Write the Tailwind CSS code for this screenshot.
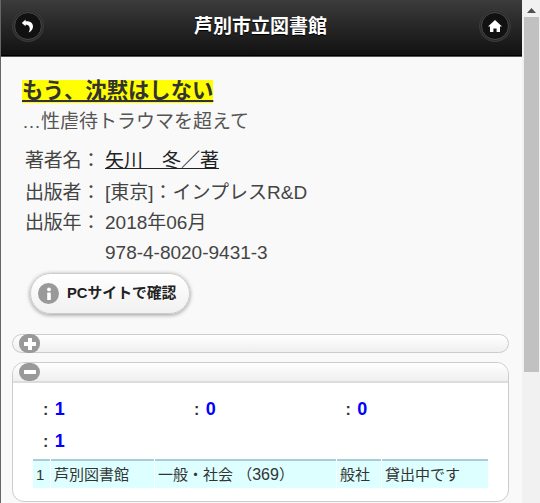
<!DOCTYPE html>
<html lang="ja">
<head>
    <meta charset="UTF-8">
    <meta name="viewport" content="width=device-width, initial-scale=1.0">
    <title>芦別市立図書館</title>
    <script src="https://cdn.jsdelivr.net/npm/@tailwindcss/browser@4"></script>
</head>
<body class="h-[503px] overflow-hidden bg-[#f9f9f9] font-['Liberation_Sans','Noto_Sans_CJK_JP',sans-serif] text-[#333]">
    <div class="flex h-[503px]">
        <main class="w-[522px] shrink-0 border-l border-[#666]">
            <!-- Header -->
            <header class="flex h-[57px] items-center justify-between border-b border-b-[#555] bg-gradient-to-b from-[#3c3c3c] to-[#111] pr-[13px] pb-[4px] pl-[13px] shadow-[inset_0_-1px_0_#000]">
                <button class="flex h-[28px] w-[28px] items-center justify-center rounded-full border border-[#4a4a4a] bg-[#111] shadow-[0_0_0_1px_#2a2a2a,0_0_0_2px_#3a3a3a]" aria-label="戻る">
                    <svg viewBox="0 0 14 14" class="h-[14px] w-[14px]"><path d="M4.6 0.6 L4.6 7.2 L0.8 3.9 Z M4.4 2.4 C8.6 2 12 4 12 7.4 C12 10 10.4 12.2 7.6 13.4 C8.8 11.4 9 10 8.6 8.4 C8.2 6.6 6.6 5.4 4.4 5.4 Z" fill="#fff"/></svg>
                </button>
                <h1 class="-ml-[2px] text-[19px] leading-none font-bold text-white [text-shadow:0_1px_1px_#000]">芦別市立図書館</h1>
                <button class="flex h-[28px] w-[28px] items-center justify-center rounded-full border border-[#4a4a4a] bg-[#111] shadow-[0_0_0_1px_#2a2a2a,0_0_0_2px_#3a3a3a]" aria-label="ホーム">
                    <svg viewBox="0 0 14 14" class="h-[14px] w-[14px]"><path d="M7 1 L14 7.4 L12 7.4 L12 13 L8.6 13 L8.6 9.4 L5.4 9.4 L5.4 13 L2 13 L2 7.4 L0 7.4 Z" fill="#fff"/></svg>
                </button>
            </header>

            <!-- Book detail -->
            <section class="pt-[23px] pl-[21px]">
                <h2 class="w-fit bg-[#ff0] text-[21.33px] leading-[23px] font-bold text-[#333] underline">もう、沈黙はしない</h2>
                <p class="mt-[5px] text-[19px] leading-[28px] text-[#555]">…性虐待トラウマを超えて</p>
                <dl class="mt-[10px] pl-[3px] text-[19px] leading-[30px] text-[#444]">
                    <div class="flex h-[32px]"><dt class="w-[80px] tracking-[-0.2px]">著者名：</dt><dd class="text-[#222] underline">矢川　冬／著</dd></div>
                    <div class="flex h-[30px]"><dt class="w-[80px] tracking-[-0.2px]">出版者：</dt><dd>[東京]：インプレスR&amp;D</dd></div>
                    <div class="flex h-[30px]"><dt class="w-[80px] tracking-[-0.2px]">出版年：</dt><dd>2018年06月</dd></div>
                    <div class="flex h-[30px]"><dt class="w-[80px]"></dt><dd>978-4-8020-9431-3</dd></div>
                </dl>
                <button class="mt-[5px] ml-[8px] flex h-[41px] w-[160px] items-center gap-[8px] rounded-full border border-[#ccc] bg-gradient-to-b from-white to-[#f1f1f1] pl-[7px] text-[14.8px] font-bold text-[#222] shadow-[0_1px_4px_rgba(0,0,0,0.4)]">
                    <span class="flex h-[21px] w-[21px] items-center justify-center rounded-full bg-[#999]">
                        <svg viewBox="0 0 12 14" class="h-[14px] w-[12px]"><circle cx="6" cy="2.4" r="1.9" fill="#fff"/><rect x="4.2" y="5.4" width="3.6" height="7.6" rx="0.6" fill="#fff"/></svg>
                    </span>
                    PCサイトで確認
                </button>
            </section>

            <!-- Collapsibles -->
            <section class="mt-[20px] mr-[13px] ml-[11px] flex h-[19px] rounded-full border border-[#ccc] bg-gradient-to-b from-white to-[#efefef]">
                <span class="-mt-px ml-[6px] flex h-[19px] w-[21px] items-center justify-center rounded-[9px] bg-[#999]">
                    <svg viewBox="0 0 14 14" class="h-[14px] w-[14px]"><path d="M5 1 H9 V5 H13 V9 H9 V13 H5 V9 H1 V5 H5 Z" fill="#fff"/></svg>
                </span>
            </section>
            <section class="mt-[9px] mr-[13px] ml-[11px] h-[140px] rounded-[12px] border border-[#ccc] bg-white">
                <div class="flex h-[20px] rounded-t-[12px] border-b-2 border-b-[#ddd] bg-gradient-to-b from-white to-[#efefef] pl-[6px]">
                    <span class="flex h-[18px] w-[21px] items-center justify-center rounded-[9px] bg-[#999]">
                        <svg viewBox="0 0 14 14" class="h-[14px] w-[14px]"><rect x="1" y="5" width="12" height="4" rx="0.5" fill="#fff"/></svg>
                    </span>
                </div>
                <div class="pt-[10px] pl-[20px]">
                    <div class="grid h-[32px] w-[480px] grid-cols-[151px_151.5px_1fr] items-center text-[16px]">
                        <p class="pl-[10px] font-bold text-[#333]">: <span class="ml-[2px] text-[18px] text-[#00f]">1</span></p>
                        <p class="pl-[10px] font-bold text-[#333]">: <span class="ml-[2px] text-[18px] text-[#00f]">0</span></p>
                        <p class="pl-[10px] font-bold text-[#333]">: <span class="ml-[2px] text-[18px] text-[#00f]">0</span></p>
                    </div>
                    <div class="flex h-[32px] items-center text-[16px]">
                        <p class="pl-[10px] font-bold text-[#333]">: <span class="ml-[2px] text-[18px] text-[#00f]">1</span></p>
                    </div>
                    <div class="mt-[2px] grid h-[29px] w-[455px] grid-cols-[17px_103px_181px_44px_106px] gap-x-px text-[15px] leading-[27px] text-[#333]">
                        <span class="border-t-2 border-t-[#a9cdd8] bg-[#dff] pl-[3px]">1</span>
                        <span class="border-t-2 border-t-[#a9cdd8] bg-[#dff] pl-[3px]">芦別図書館</span>
                        <span class="border-t-2 border-t-[#a9cdd8] bg-[#dff] pl-[3px]">一般・社会 （<span class="text-[16px]">369</span>）</span>
                        <span class="border-t-2 border-t-[#a9cdd8] bg-[#dff] pl-[3px]">般社</span>
                        <span class="border-t-2 border-t-[#a9cdd8] bg-[#dff] pl-[3px]">貸出中です</span>
                    </div>
                </div>
            </section>
        </main>

        <!-- Scrollbar -->
        <aside class="flex w-[18px] flex-col items-center bg-[#f1f1f1]">
            <svg viewBox="0 0 9 5" class="mt-[8px] h-[5px] w-[9px]"><path d="M4.5 0 L9 5 H0 Z" fill="#505050"/></svg>
            <div class="mt-[4px] h-[355px] w-[15px] bg-[#c1c1c1]"></div>
        </aside>
    </div>
</body>
</html>
